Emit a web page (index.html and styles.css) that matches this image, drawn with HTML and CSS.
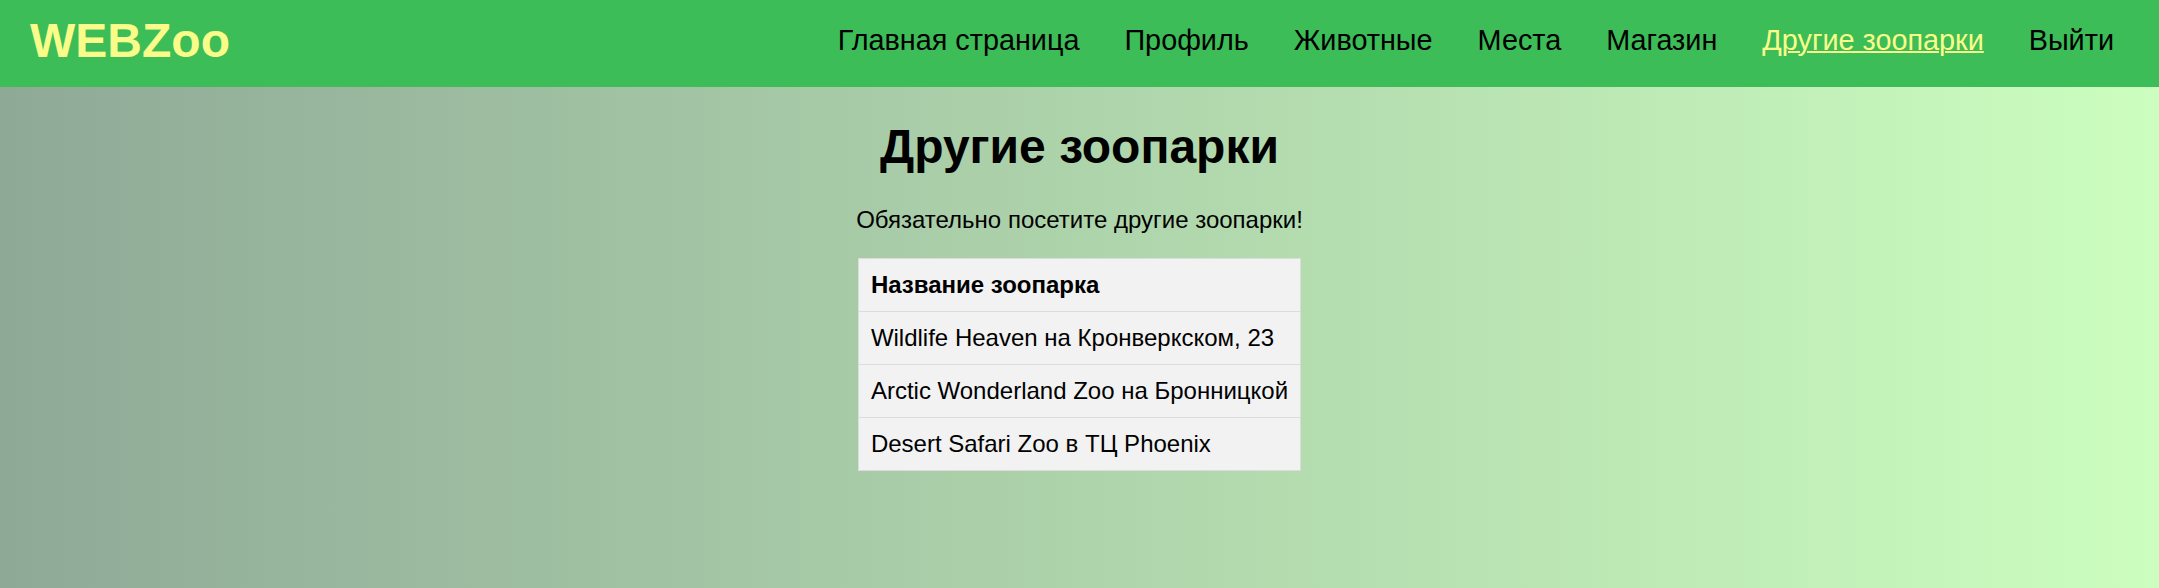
FILE: index.html
```html
<!DOCTYPE html>
<html lang="ru">
<head>
<meta charset="utf-8">
<title>WEBZoo — Другие зоопарки</title>
<link rel="stylesheet" href="styles.css">
</head>
<body>
<header class="topbar">
  <a class="logo" href="#">WEBZoo</a>
  <nav class="menu">
    <a href="#">Главная страница</a>
    <a href="#">Профиль</a>
    <a href="#">Животные</a>
    <a href="#">Места</a>
    <a href="#">Магазин</a>
    <a href="#" class="active">Другие зоопарки</a>
    <a href="#">Выйти</a>
  </nav>
</header>
<main class="content">
  <h1 class="title">Другие зоопарки</h1>
  <p class="lead">Обязательно посетите другие зоопарки!</p>
  <table class="zoos">
    <thead>
      <tr><th>Название зоопарка</th></tr>
    </thead>
    <tbody>
      <tr><td>Wildlife Heaven на Кронверкском, 23</td></tr>
      <tr><td>Arctic Wonderland Zoo на Бронницкой</td></tr>
      <tr><td>Desert Safari Zoo в ТЦ Phoenix</td></tr>
    </tbody>
  </table>
</main>
</body>
</html>
```
FILE: styles.css
```css
html, body {
  margin: 0;
  padding: 0;
  height: 100%;
}
body {
  font-family: "Liberation Sans", Arial, sans-serif;
  font-size: 24px;
  color: #000;
  background: linear-gradient(to right, #8fa997, #ccfebf);
  min-height: 588px;
}
.topbar {
  display: flex;
  align-items: center;
  justify-content: space-between;
  height: 87px;
  box-sizing: border-box;
  padding: 0 45px 6px 30px;
  background: #3cbd57;
}
.logo {
  font-size: 48px;
  font-weight: bold;
  color: #fafc8a;
  text-decoration: none;
}
.menu {
  display: flex;
  gap: 45px;
}
.menu a {
  font-size: 28.8px;
  color: #000;
  text-decoration: none;
}
.menu a.active {
  color: #fafc8a;
  text-decoration: underline;
  text-decoration-thickness: 2px;
}
.content {
  display: flex;
  flex-direction: column;
  align-items: center;
  padding-top: 32px;
}
.title {
  margin: 0;
  font-size: 48px;
  font-weight: bold;
}
.lead {
  margin: 32px 0 24px;
  font-size: 24px;
}
.zoos {
  border-collapse: collapse;
  background: #f2f2f2;
  border: 1px solid #dcdcdc;
  font-size: 24px;
}
.zoos th,
.zoos td {
  text-align: left;
  padding: 12px;
  border-bottom: 1px solid #dcdcdc;
}
.zoos th {
  font-weight: bold;
}
```
